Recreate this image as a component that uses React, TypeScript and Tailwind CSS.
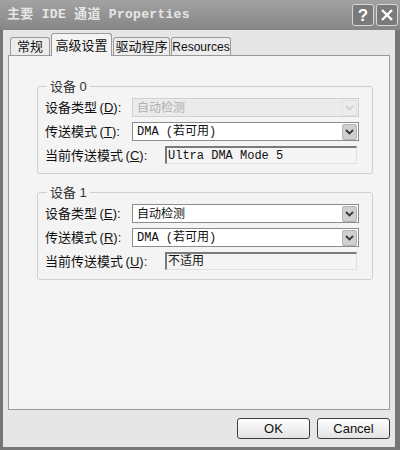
import React from "react";

const cjk = "font-['Liberation_Sans','Noto_Sans_CJK_SC',sans-serif]";
const mono = "font-['Liberation_Mono','Noto_Sans_CJK_SC',monospace]";

const Arrow = ({ disabled }: { disabled?: boolean }) => (
  <div
    className={`flex h-[16px] w-[15px] items-center justify-center rounded-[2px] border ${
      disabled ? "border-[#e2e2e2] bg-[#ececec]" : "border-[#b5b5b5] bg-[#cfcfcf]"
    }`}
  >
    <svg width="9" height="6" viewBox="0 0 9 6">
      <path
        d="M1 1 L4.5 4.5 L8 1"
        fill="none"
        stroke={disabled ? "#cfcfcf" : "#3a3a3a"}
        strokeWidth="1.8"
      />
    </svg>
  </div>
);

const Combo = ({ value, disabled, monoText }: { value: string; disabled?: boolean; monoText?: boolean }) => (
  <div
    className={`flex h-[19px] w-[227px] items-center justify-between border pl-[4px] pr-[1px] ${
      disabled ? "border-[#d0d0d0] bg-[#ebebeb] text-[#b0b0b0]" : "border-[#8c8c8c] bg-white text-[#111]"
    }`}
  >
    <span className={`${monoText ? mono : cjk} text-[12px] leading-none`}>{value}</span>
    <Arrow disabled={disabled} />
  </div>
);

const ReadOnly = ({ value }: { value: string }) => (
  <div
    className={`flex h-[18px] w-[192px] items-center border-t-2 border-l-2 border-t-[#7a7a7a] border-l-[#7a7a7a] border-r border-b border-r-[#e0e0e0] border-b-[#e0e0e0] bg-[#f4f4f4] pl-[1px] text-[12px] leading-none text-[#111] ${mono}`}
  >
    {value}
  </div>
);

const Label = ({ text, k, w }: { text: string; k: string; w: string }) => (
  <span className={`${cjk} ${w} text-[13px] leading-none text-[#111]`}>
    {text}&thinsp;(<u>{k}</u>):
  </span>
);

const Group = ({
  title,
  type,
  typeKey,
  mode,
  modeKey,
  cur,
  curKey,
  curValue,
  typeDisabled,
}: {
  title: string;
  type: string;
  typeKey: string;
  mode: string;
  modeKey: string;
  cur: string;
  curKey: string;
  curValue: string;
  typeDisabled?: boolean;
}) => (
  <fieldset className="rounded-[3px] border border-[#cfcfcf] pr-[13px] pl-[7px] pb-[9px]">
    <legend className={`${cjk} ml-[2px] px-[3px] text-[13px] leading-none text-[#333]`}>{title}</legend>
    <div className="mt-[5px] flex flex-col gap-[5px]">
      <div className="flex items-center">
        <Label text="设备类型" k={typeKey} w="w-[87px]" />
        <Combo value={type} disabled={typeDisabled} />
      </div>
      <div className="flex items-center">
        <Label text="传送模式" k={modeKey} w="w-[87px]" />
        <Combo value={mode} monoText />
      </div>
      <div className="flex items-center">
        <Label text={cur} k={curKey} w="w-[120px]" />
        <ReadOnly value={curValue} />
      </div>
    </div>
  </fieldset>
);

const Tab = ({ label, active, w }: { label: string; active?: boolean; w: string }) => (
  <div
    className={`${cjk} ${w} flex items-center justify-center rounded-t-[3px] border border-b-0 border-[#9a9a9a] text-[13px] leading-none text-[#111] ${
      active ? "relative z-10 -mb-px h-[23px] bg-[#f4f4f4]" : "h-[18px] bg-[#ececec]"
    }`}
  >
    {label}
  </div>
);

const Button = ({ label }: { label: string }) => (
  <button
    className={`${cjk} h-[21px] w-[73px] rounded-[3px] border border-[#3c3c3c] bg-gradient-to-b from-white to-[#e2e2e2] text-[13px] leading-none text-[#111]`}
  >
    {label}
  </button>
);

export default function App() {
  return (
    <div className="flex h-[450px] w-[400px] flex-col bg-[#767676]">
      {/* title bar */}
      <div className="flex h-[30px] items-center justify-between bg-gradient-to-b from-[#a2a2a2] to-[#868686] pl-[7px] pr-[2px]">
        <span className={`${mono} text-[13px] font-bold tracking-[0.3px] text-[#e6e6e6]`}>主要 IDE 通道 Properties</span>
        <div className="flex gap-[2px]">
          <div className="flex h-[22px] w-[22px] items-center justify-center rounded-[3px] border border-[#d8d8d8] bg-[#7a7a7a] text-[17px] font-bold leading-none text-white font-['Liberation_Sans',sans-serif]">
            ?
          </div>
          <div className="flex h-[22px] w-[22px] items-center justify-center rounded-[3px] border border-[#d8d8d8] bg-[#7a7a7a]">
            <svg width="14" height="14" viewBox="0 0 14 14">
              <path d="M2 2 L12 12 M12 2 L2 12" stroke="white" strokeWidth="2.4" />
            </svg>
          </div>
        </div>
      </div>

      {/* body */}
      <div className="mx-[3px] mb-[3px] mr-[5px] flex flex-1 flex-col bg-[#e6e6e6] px-[5px] pt-[3px]">
        <div className="flex items-end gap-[1px] pl-[2px]">
          <Tab label="常规" w="w-[40px]" />
          <Tab label="高级设置" w="w-[61px]" active />
          <Tab label="驱动程序" w="w-[57px]" />
          <div className={`flex h-[18px] w-[60px] items-center justify-center rounded-t-[3px] border border-b-0 border-[#9a9a9a] bg-[#ececec] text-[12px] leading-none text-[#111] font-['Liberation_Sans',sans-serif]`}>
            Resources
          </div>
        </div>
        <div className="flex h-[355px] flex-col gap-[12px] border border-[#9a9a9a] bg-[#f4f4f4] pl-[28px] pr-[17px] pt-[24px]">
          <Group
            title="设备 0"
            type="自动检测"
            typeKey="D"
            typeDisabled
            mode="DMA (若可用)"
            modeKey="T"
            cur="当前传送模式"
            curKey="C"
            curValue="Ultra DMA Mode 5"
          />
          <Group
            title="设备 1"
            type="自动检测"
            typeKey="E"
            mode="DMA (若可用)"
            modeKey="R"
            cur="当前传送模式"
            curKey="U"
            curValue="不适用"
          />
        </div>
        <div className="flex justify-end gap-[7px] pt-[8px] pr-0">
          <Button label="OK" />
          <Button label="Cancel" />
        </div>
      </div>
    </div>
  );
}
